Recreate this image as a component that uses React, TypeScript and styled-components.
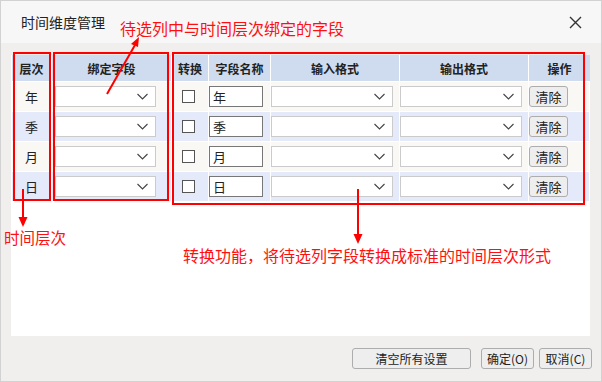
import styled, { createGlobalStyle } from 'styled-components'

const GlobalStyle = createGlobalStyle`
  body {
    margin: 0;
    font-family: "Noto Sans CJK SC", "Noto Sans", sans-serif;
    color: #222;
  }
  * { box-sizing: border-box; }
`

const levels = ['年', '季', '月', '日']
const columns = [
  { label: '层次', width: 40 },
  { label: '绑定字段', width: 120 },
  { label: '转换', width: 37 },
  { label: '字段名称', width: 62 },
  { label: '输入格式', width: 129 },
  { label: '输出格式', width: 129 },
  { label: '操作', width: 61 },
]

const Dialog = styled.div`
  position: relative;
  width: 602px;
  height: 382px;
  display: flex;
  flex-direction: column;
  background: #f0efed;
  border: 1px solid #d2d2d2;
`

const TitleBar = styled.div`
  height: 42px;
  display: flex;
  align-items: center;
  justify-content: space-between;
  padding: 0 19px 0 20px;
  background: #f7f7f7;
`

const Title = styled.span`
  font-size: 14px;
  color: #222;
`

const Body = styled.div`
  flex: 1;
  display: flex;
  padding: 12px 11px 0 10px;
`

const Panel = styled.div`
  flex: 1;
  background: #fff;
  padding-left: 1px;
`

const Grid = styled.div`
  display: grid;
  grid-template-columns: ${columns.map((c) => `${c.width}px`).join(' ')};
`

const HeadCell = styled.div`
  height: 27px;
  display: flex;
  align-items: center;
  justify-content: center;
  background: #cfdcef;
  border-right: 1px solid #fff;
  border-bottom: 1px solid #fff;
  font-size: 12px;
  font-weight: 700;
  color: #222;
  &:nth-child(7) { border-right: none; }
`

const Cell = styled.div<{ $alt: boolean; $pad?: number; $center?: boolean }>`
  height: 30px;
  display: flex;
  align-items: center;
  justify-content: ${(p) => (p.$center ? 'center' : 'flex-start')};
  padding-left: ${(p) => p.$pad ?? 0}px;
  background: ${(p) => (p.$alt ? '#e5eafb' : '#f9f8f5')};
  border-right: 1px solid #fff;
  border-bottom: 1px solid #fff;
  font-size: 13px;
`

const SelectBox = styled.div<{ $w: number }>`
  width: ${(p) => p.$w}px;
  height: 21px;
  background: #fff;
  border: 1px solid #cbcbcb;
  display: flex;
  align-items: center;
  justify-content: flex-end;
  padding-right: 7px;
`

const Check = styled.div`
  width: 13px;
  height: 13px;
  background: #fff;
  border: 1px solid #555;
`

const NameInput = styled.div`
  width: 54px;
  height: 21px;
  background: #fff;
  border: 1px solid #777;
  display: flex;
  align-items: center;
  padding-left: 3px;
  font-size: 13px;
`

const Button = styled.button<{ $w: number; $size?: number }>`
  width: ${(p) => p.$w}px;
  height: 21px;
  padding: 0;
  border: 1px solid #adadad;
  border-radius: 3px;
  background: #eeeeee;
  font-family: "Noto Sans CJK SC", "Noto Sans", sans-serif;
  font-size: ${(p) => p.$size ?? 12}px;
  color: #222;
  line-height: 19px;
`

const Footer = styled.div`
  height: 45px;
  display: flex;
  align-items: center;
  justify-content: flex-end;
  gap: 5px;
  padding-right: 9px;
`

const Spacer = styled.div`
  width: 0;
`

const Overlay = styled.div`
  position: absolute;
  inset: -1px;
  pointer-events: none;
`

const RedBox = styled.div<{ $x: number; $y: number; $w: number; $h: number }>`
  position: absolute;
  left: ${(p) => p.$x}px;
  top: ${(p) => p.$y}px;
  width: ${(p) => p.$w}px;
  height: ${(p) => p.$h}px;
  border: 2px solid #ff0000;
`

const Note = styled.span<{ $x: number; $y: number; $size?: number }>`
  position: absolute;
  left: ${(p) => p.$x}px;
  top: ${(p) => p.$y}px;
  font-size: ${(p) => p.$size ?? 16}px;
  line-height: 1;
  color: #ff1010;
  white-space: nowrap;
`

const Arrows = styled.svg`
  position: absolute;
  left: 0;
  top: 0;
`

function Chevron() {
  return (
    <svg width="11" height="7" viewBox="0 0 11 7">
      <polyline points="0.5,1 5.5,6 10.5,1" fill="none" stroke="#444" strokeWidth="1.1" />
    </svg>
  )
}

function CloseIcon() {
  return (
    <svg width="13" height="13" viewBox="0 0 13 13">
      <path d="M1 1 L12 12 M12 1 L1 12" stroke="#333" strokeWidth="1.4" />
    </svg>
  )
}

export default function App() {
  return (
    <>
      <GlobalStyle />
      <Dialog>
        <TitleBar>
          <Title>时间维度管理</Title>
          <CloseIcon />
        </TitleBar>
        <Body>
          <Panel>
            <Grid>
              {columns.map((c) => (
                <HeadCell key={c.label}>{c.label}</HeadCell>
              ))}
              {levels.map((lv, i) => {
                const alt = i % 2 === 1
                return [
                  <Cell key={`${lv}-a`} $alt={alt} $center>{lv}</Cell>,
                  <Cell key={`${lv}-b`} $alt={alt} $pad={3}>
                    <SelectBox $w={101}><Chevron /></SelectBox>
                  </Cell>,
                  <Cell key={`${lv}-c`} $alt={alt} $pad={10}>
                    <Check />
                  </Cell>,
                  <Cell key={`${lv}-d`} $alt={alt}>
                    <NameInput>{lv}</NameInput>
                  </Cell>,
                  <Cell key={`${lv}-e`} $alt={alt}>
                    <SelectBox $w={122}><Chevron /></SelectBox>
                  </Cell>,
                  <Cell key={`${lv}-f`} $alt={alt}>
                    <SelectBox $w={122}><Chevron /></SelectBox>
                  </Cell>,
                  <Cell key={`${lv}-g`} $alt={alt}>
                    <Button $w={39} $size={13}>清除</Button>
                  </Cell>,
                ]
              })}
            </Grid>
          </Panel>
        </Body>
        <Footer>
          <Button $w={119}>清空所有设置</Button>
          <Spacer />
          <Button $w={53}>确定(O)</Button>
          <Button $w={53}>取消(C)</Button>
        </Footer>
        <Overlay>
          <RedBox $x={13} $y={52} $w={38} $h={149} />
          <RedBox $x={53} $y={52} $w={116} $h={149} />
          <RedBox $x={172} $y={52} $w={413} $h={153} />
          <Arrows width="602" height="382">
            <g stroke="#ff0000" strokeWidth="2" fill="#ff0000">
              <line x1="107" y1="94" x2="135" y2="45" />
              <polygon points="139,37 131,44 138,47" stroke="none" />
              <line x1="23" y1="189" x2="23" y2="218" />
              <polygon points="23,227 18.5,217 27.5,217" stroke="none" />
              <line x1="358" y1="189" x2="358" y2="235" />
              <polygon points="358,244 353.5,234 362.5,234" stroke="none" />
            </g>
          </Arrows>
          <Note $x={120} $y={20}>待选列中与时间层次绑定的字段</Note>
          <Note $x={4} $y={230} $size={15.5}>时间层次</Note>
          <Note $x={183} $y={247}>转换功能，将待选列字段转换成标准的时间层次形式</Note>
        </Overlay>
      </Dialog>
    </>
  )
}
